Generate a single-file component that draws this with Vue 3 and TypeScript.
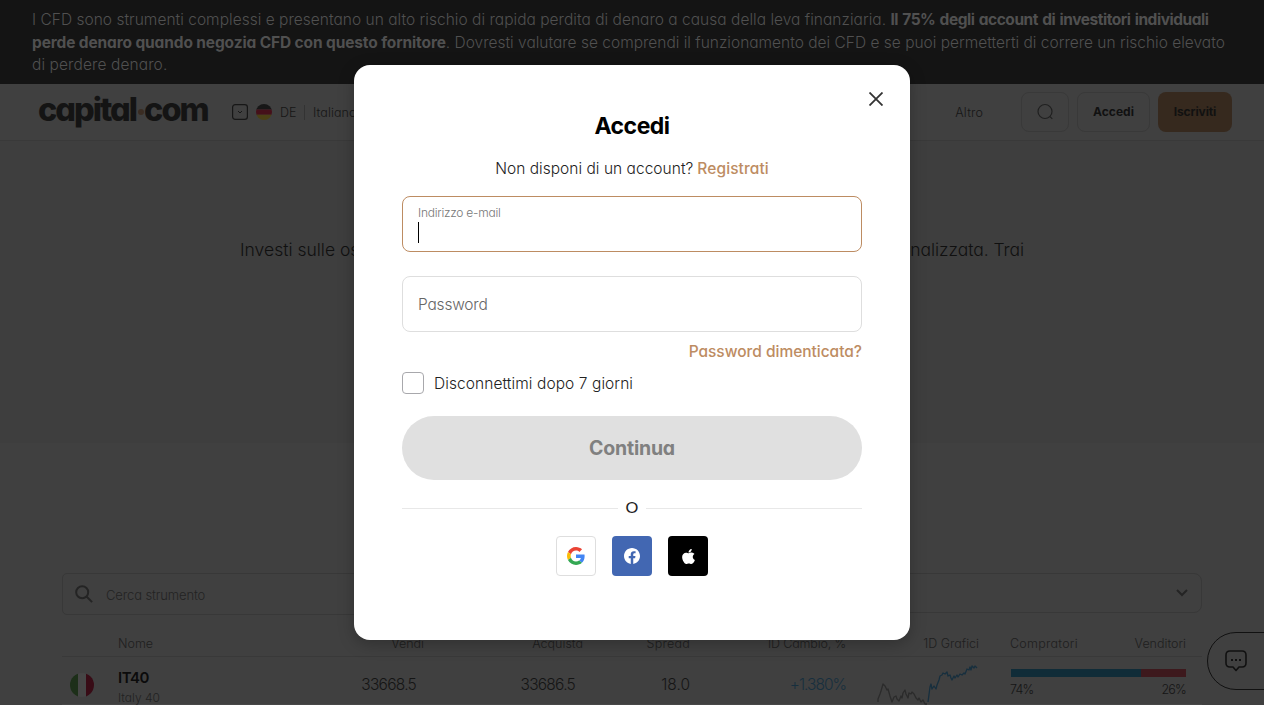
<script setup lang="ts">
interface Social { id: string; label: string }
const socials: Social[] = [
  { id: 'google', label: 'Google' },
  { id: 'facebook', label: 'Facebook' },
  { id: 'apple', label: 'Apple' },
]
const buyers = 74
const sellers = 26
</script>

<template>
  <div class="page">
    <div class="warning">
      <div class="w1">I CFD sono strumenti complessi e presentano un alto rischio di rapida perdita di denaro a causa della leva finanziaria. <b>Il 75% degli account di investitori individuali</b></div>
      <div class="w2"><b>perde denaro quando negozia CFD con questo fornitore</b>. Dovresti valutare se comprendi il funzionamento dei CFD e se puoi permetterti di correre un rischio elevato</div>
      <div class="w3">di perdere denaro.</div>
    </div>

    <header class="header">
      <div class="logo"><span>capital</span><i></i><span>com</span></div>
      <svg class="country" width="16" height="16" viewBox="0 0 16 16" fill="none" stroke="#171717"><rect x=".6" y=".6" width="14.8" height="14.8" rx="2.6" stroke-width="1.2" /><path d="M6 7l2 2 2-2" /></svg>
      <svg class="de" width="16" height="16" viewBox="0 0 16 16"><clipPath id="de"><circle cx="8" cy="8" r="8" /></clipPath><g clip-path="url(#de)"><path fill="#171717" d="M0 0h16v5.4H0z" /><path fill="#45101a" d="M0 5.4h16v5.3H0z" /><path fill="#4b4015" d="M0 10.7h16V16H0z" /></g></svg>
      <span class="code">DE</span>
      <span class="lang">Italiano</span>
      <div class="actions">
        <span class="altro">Altro</span>
        <button class="btn find"><svg width="18" height="18" viewBox="0 0 18 18" fill="none" stroke="#202020" stroke-width="1.2"><circle cx="9" cy="8.500" r="7" /><path d="M14.100 13.600l2.200 2.200" /></svg></button>
        <button class="btn login">Accedi</button>
        <button class="btn join">Iscriviti</button>
      </div>
    </header>

    <section class="hero">
      <span class="lead-a">Investi sulle os</span>
      <span class="lead-b">personalizzata. Trai</span>
    </section>

    <section class="market">
      <div class="filters">
        <div class="search">
          <svg width="18" height="18" viewBox="0 0 18 18" fill="none" stroke="#242424" stroke-width="2"><circle cx="7.2" cy="7.2" r="6" /><path d="M11.5 11.5l5.6 5.6" /></svg>
          <span>Cerca strumento</span>
        </div>
        <div class="select"><svg width="12" height="8" viewBox="0 0 12 8" fill="none" stroke="#242424" stroke-width="2"><path d="M1 1l5 5 5-5" /></svg></div>
      </div>
      <div class="grid head">
        <span class="c-name">Nome</span><span class="num">Vendi</span><span class="num">Acquista</span><span class="num wide">Spread</span><span class="num tight">1D Cambio, %</span><span class="num">1D Grafici</span>
        <span class="sides"><span class="wide">Compratori</span><span>Venditori</span></span>
      </div>
      <div class="grid row">
        <svg class="it" width="24" height="24" viewBox="0 0 24 24"><clipPath id="it"><circle cx="12" cy="12" r="12" /></clipPath><g clip-path="url(#it)"><path fill="#1d2f19" d="M0 0h8v24H0z" /><path fill="#464646" d="M8 0h8v24H8z" /><path fill="#380c16" d="M16 0h8v24h-8z" /></g></svg>
        <div class="instrument"><b>IT40</b><span>Italy 40</span></div>
        <span class="num val price">33668.5</span><span class="num val price">33686.5</span><span class="num val">18.0</span><span class="num val up">+1.380%</span>
        <svg class="chart" width="102" height="42" viewBox="0 0 102 42" fill="none" stroke-width="1.3" stroke-linejoin="round">
          <path stroke="#2b2b2b" d="M1 39V36L3 31L4 28L6 21L8 23L10 27L11 26L13 33L15 39L17 34L19 33L20 36L22 38L24 33L25 35L26 30L28 27L29 31L31 35L32 30L34 31L35 29L37 31L39 35L41 37L42 35L44 39L46 37L48 41L50 41" />
          <path stroke="#172f3e" d="M51 39L53 24L54 21L55 26L57 23L59 26L60 22L62 17L63 13L65 12L66 10L68 11L70 9L71 13L73 12L74 15L75 17L77 13L78 15L80 12L81 14L83 11L85 12L87 10L88 11L90 6L92 7L93 4L94 7L95 3L97 5L98 3L100 5" />
        </svg>
        <div class="sentiment">
          <div class="bar"><i class="buy" :style="{ width: buyers + '%' }"></i><i class="sell"></i></div>
          <div class="pct"><span>{{ buyers }}%</span><span>{{ sellers }}%</span></div>
        </div>
      </div>
    </section>

    <div class="chat"><svg width="22" height="22" viewBox="0 0 22 22" fill="none" stroke="#111" stroke-width="1.6" stroke-linejoin="round"><path d="M5 1h12q4 0 4 4v8q0 4-4 4h-3l-3 3.5L8 17H5q-4 0-4-4V5q0-4 4-4z" /><path stroke-width="2" stroke-dasharray="2 2" d="M6 10h10" /></svg></div>

    <div class="overlay">
      <form class="modal" @submit.prevent>
        <svg class="close" width="14" height="14" viewBox="0 0 14 14" stroke="#333" stroke-width="1.8"><path d="M.5.5l13 13M13.5.5l-13 13" /></svg>
        <h1>Accedi</h1>
        <p class="sub"><span>Non disponi di un account?</span><a>Registrati</a></p>
        <div class="field active"><label>Indirizzo e-mail</label><i class="caret"></i></div>
        <div class="field pw"><span>Password</span></div>
        <a class="forgot">Password dimenticata?</a>
        <div class="remember"><i></i><span>Disconnettimi dopo 7 giorni</span></div>
        <button class="continue">Continua</button>
        <div class="or"><i></i><span>O</span><i></i></div>
        <div class="socials">
          <button v-for="s in socials" :key="s.id" :class="s.id" :aria-label="s.label">
            <svg v-if="s.id === 'google'" width="18" height="18" viewBox="0 0 48 48"><path fill="#EA4335" d="M24 9.500c3.540 0 6.710 1.220 9.210 3.600l6.850-6.850C35.900 2.380 30.470 0 24 0 14.620 0 6.510 5.380 2.560 13.220l7.980 6.190C12.430 13.720 17.740 9.500 24 9.500z" /><path fill="#4285F4" d="M46.980 24.550c0-1.570-.15-3.090-.38-4.550H24v9.020h12.940c-.58 2.960-2.260 5.480-4.780 7.180l7.730 6c4.510-4.180 7.090-10.360 7.090-17.650z" /><path fill="#FBBC05" d="M10.530 28.590c-.48-1.450-.76-2.990-.76-4.590s.27-3.140.76-4.590l-7.980-6.190C.92 16.460 0 20.120 0 24s.92 7.540 2.560 10.780l7.970-6.190z" /><path fill="#34A853" d="M24 48c6.480 0 11.930-2.130 15.890-5.810l-7.730-6c-2.150 1.450-4.920 2.300-8.160 2.300-6.260 0-11.570-4.220-13.470-9.910l-7.980 6.190C6.510 42.620 14.620 48 24 48z" /></svg>
            <svg v-else-if="s.id === 'facebook'" width="16" height="16" viewBox="0 0 24 24"><path fill="#fff" d="M24 12.070C24 5.400 18.630 0 12 0S0 5.400 0 12.070c0 6.030 4.390 11.020 10.130 11.930v-8.440H7.080v-3.490h3.050V9.410c0-3.020 1.790-4.690 4.530-4.690 1.310 0 2.690.24 2.690.24v2.970h-1.520c-1.490 0-1.950.93-1.950 1.880v2.260h3.320l-.53 3.490h-2.790V24C19.610 23.090 24 18.100 24 12.070z" /></svg>
            <svg v-else width="13" height="15" viewBox="0 32 384 448" preserveAspectRatio="none"><path fill="#fff" d="M318.700 268.700c-.2-36.700 16.400-64.400 50-84.800-18.800-26.900-47.200-41.700-84.700-44.600-35.500-2.800-74.300 20.700-88.500 20.700-15 0-49.400-19.700-76.400-19.700C63.300 141.200 4 184.800 4 273.500q0 39.300 14.400 81.200c12.800 36.700 59 126.700 107.200 125.200 25.200-.6 43-17.900 75.800-17.900 31.800 0 48.300 17.900 76.400 17.900 48.600-.7 90.400-82.500 102.600-119.300-65.200-30.700-61.700-90-61.700-91.900zm-56.600-164.200c27.300-32.400 24.800-61.900 24-72.500-24.100 1.400-52 16.400-67.900 34.900-17.500 19.800-27.800 44.300-25.600 71.900 26.100 2 49.900-11.400 69.500-34.300z" /></svg>
          </button>
        </div>
      </form>
    </div>
  </div>
</template>

<style>
body { margin: 0; overflow: hidden; }
</style>

<style scoped>
* { box-sizing: border-box; }
.page { position: relative; width: 1264px; height: 705px; overflow: hidden; background: #404040; color: #151515; font-family: Inter, Lato, sans-serif; font-feature-settings: "cv11", "calt" 0; font-weight: 300; white-space: nowrap; }
button { font: inherit; font-feature-settings: inherit; padding: 0; border: 0; display: flex; align-items: center; justify-content: center; }
i { display: block; }
svg { display: block; flex: none; }
.warning { height: 84px; padding: 9.4px 32px 0; background: #141414; color: #505050; font-size: 15.5px; line-height: 22.5px; }
.warning b { font-weight: 700; }
.w1 { letter-spacing: .022px; }
.w1 b { letter-spacing: -.34px; word-spacing: 1px; letter-spacing: -.46px; }
.w2 b { letter-spacing: -.13px; }
.w3 { letter-spacing: .1px; }
.header { height: 57px; padding: 0 32px 0 38px; border-bottom: 1px solid #393939; display: flex; align-items: center; font-size: 12.5px; color: #161616; }
.logo { width: 194px; display: flex; align-items: center; color: #141414; font-size: 32.5px; font-weight: 800; line-height: 40px; letter-spacing: -2px; margin-top: -5px; }
.logo i { width: 6px; height: 6px; border-radius: 50%; background: #3a2c22; margin: 5px 0 0 2px; }
.de { margin: 0 8px; }
.code { width: 25px; border-right: 1px solid #333; }
.lang { margin-left: 8px; letter-spacing: .1px; }
.actions { margin-left: auto; display: flex; align-items: center; gap: 8px; }
.altro { margin-right: 30px; letter-spacing: .15px; }
.btn { height: 40px; border: 1px solid #393939; border-radius: 8px; background: transparent; color: #111; font-size: 12px; font-weight: 700; padding-bottom: 1px; }
.find { width: 48px; }
.login { width: 73px; }
.join { width: 74px; border: 0; background: #36291e; letter-spacing: -.1px; }
.hero { height: 302px; padding: 98px 240px 0; background: #3e3e3e; display: flex; justify-content: space-between; font-size: 17.5px; line-height: 22px; color: #101010; }
.lead-b { letter-spacing: -.05px; }
.market { padding: 130px 62px 0; }
.filters { height: 42px; display: flex; justify-content: space-between; align-items: flex-start; }
.search { width: 560px; height: 42px; border: 1px solid #383838; border-radius: 5px; padding-left: 12px; display: flex; align-items: center; gap: 13px; font-size: 13px; letter-spacing: -.13px; color: #232323; }
.search span { padding-top: 1px; }
.select { width: 560px; height: 40px; border: 1px solid #383838; border-radius: 8px; display: flex; align-items: center; justify-content: flex-end; padding-right: 13px; }
.grid { display: grid; grid-template-columns: 56px 150px 156px 159px 107px 156px 133px 31px 176px; }
.head { height: 42px; padding-top: 20px; border-bottom: 1px solid #393939; font-size: 12.5px; line-height: 18px; color: #1e1e1e; }
.c-name { grid-column: 2; }
.num { text-align: right; }
.wide { letter-spacing: .25px; }
.tight { letter-spacing: -.15px; }
.sides { grid-column: 9; display: flex; justify-content: space-between; }
.row { height: 48px; border-bottom: 1px solid #484848; }
.it { margin: 16px 0 0 8px; }
.instrument { padding-top: 11px; display: flex; flex-direction: column; }
.instrument b { font-size: 15px; font-weight: 600; line-height: 20px; letter-spacing: -.5px; color: #0b0b0b; }
.instrument span { font-size: 12px; line-height: 20px; color: #222; }
.val { padding-top: 18px; font-size: 15.5px; line-height: 20px; }
.price { padding-right: 8px; letter-spacing: -.75px; }
.up { color: #172f3e; letter-spacing: -1px; }
.chart { justify-self: end; margin-top: 6px; }
.sentiment { grid-column: 9; padding-top: 12px; }
.bar { display: flex; height: 8px; margin-left: 1px; }
.buy { background: #102c38; }
.sell { flex: 1; background: #3d191d; }
.pct { margin-top: 4px; display: flex; justify-content: space-between; font-size: 12.5px; line-height: 18px; letter-spacing: -.8px; }
.chat { position: absolute; left: 1207px; top: 632px; width: 80px; height: 58px; border: 1px solid #111; border-radius: 29px 0 0 29px; display: flex; align-items: center; padding-left: 17px; }
.overlay { position: absolute; inset: 0; display: flex; justify-content: center; align-items: flex-start; padding-top: 65px; }
.modal { position: relative; width: 556px; height: 575px; padding: 48px 48px 0; border-radius: 16px; background: #fff; box-shadow: 0 4px 16px rgba(0, 0, 0, .25); display: flex; flex-direction: column; color: #222; font-size: 15.5px; }
.close { position: absolute; right: 27px; top: 27px; }
h1 { margin: 0; text-align: center; font-size: 23px; line-height: 27px; font-weight: 700; letter-spacing: -.5px; color: #000; }
.sub { margin: 18px 0 16px; line-height: 22px; display: flex; justify-content: center; gap: 4px; letter-spacing: .03px; }
a { color: #bd8c62; font-weight: 450; }
.sub a { letter-spacing: .1px; }
.field { height: 56px; border: 1px solid #dedede; border-radius: 8px; padding: 0 15px; }
.active { border-color: #bd8c62; padding-top: 8px; }
label { display: block; font-size: 12px; line-height: 16px; letter-spacing: -.25px; color: #777; }
.caret { width: 1px; height: 21px; background: #000; margin-top: 1px; }
.pw { margin-top: 24px; line-height: 55px; letter-spacing: -.2px; color: #666; }
.forgot { align-self: flex-end; margin-top: 8px; line-height: 24px; letter-spacing: -.02px; }
.remember { display: flex; align-items: center; gap: 10px; margin-top: 8px; height: 22px; letter-spacing: .08px; }
.remember i { width: 22px; height: 22px; border: 1px solid #a8a8ac; border-radius: 4px; }
.continue { flex: none; margin-top: 22px; height: 64px; border-radius: 32px; background: #e0e0e0; color: #808080; font-size: 19.5px; font-weight: 700; letter-spacing: -.2px; }
.or { height: 20px; margin-top: 18px; display: flex; align-items: center; justify-content: center; gap: 7px; }
.or i { flex: 1; height: 1px; background: #e8e8e8; }
.or span { width: 14px; text-align: center; font-family: Lato, sans-serif; font-size: 16px; font-weight: 400; line-height: 18px; padding-bottom: 2px; }
.socials { margin-top: 18px; display: flex; justify-content: center; gap: 16px; }
.socials button { width: 40px; height: 40px; border-radius: 4px; }
.google { background: #fff; border: 1px solid #dedede; }
.facebook { background: #4267b2; }
.apple { background: #000; }
</style>
